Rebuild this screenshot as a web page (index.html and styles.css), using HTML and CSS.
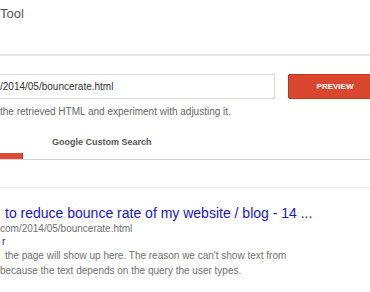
FILE: index.html
```html
<!DOCTYPE html>
<html lang="en">
<head>
    <meta charset="UTF-8">
    <meta name="viewport" content="width=device-width, initial-scale=1.0">
    <title>Bounce Rate Preview Tool</title>
    <link rel="stylesheet" href="styles.css">
</head>
<body>
    <div class="page">
        <header class="tool-head">
            <h1 class="tool-title">Tool</h1>
        </header>

        <section class="fetch">
            <div class="fetch-row">
                <div class="url-field">/2014/05/bouncerate.html</div>
                <button class="btn-preview">PREVIEW</button>
            </div>
            <p class="hint">the retrieved HTML and experiment with adjusting it.</p>
        </section>

        <nav class="tabs">
            <span class="tab tab-active"></span>
            <span class="tab">Google Custom Search</span>
        </nav>

        <div class="results">
            <div class="result">
                <a class="result-title" href="#">to reduce bounce rate of my website / blog - 14 ...</a>
                <div class="result-url">com/2014/05/bouncerate.html</div>
                <a class="result-more" href="#">r</a>
                <p class="result-snippet">the page will show up here. The reason we can't show text from<br>because the text depends on the query the user types.</p>
            </div>
        </div>
    </div>
</body>
</html>
```

FILE: styles.css
```css
* {
    margin: 0;
    padding: 0;
    box-sizing: border-box;
}

html,
body {
    overflow: hidden;
}

body {
    background: #fff;
    font-family: 'Liberation Sans', Arial, sans-serif;
    color: #666;
}

.page {
    width: 382px;
}

.tool-head {
    height: 56px;
    padding-top: 6px;
    border-bottom: 2px solid #e5e5e5;
}

.tool-title {
    font-size: 13px;
    line-height: 16px;
    font-weight: normal;
    color: #555;
}

.fetch {
    padding-top: 18px;
}

.fetch-row {
    display: flex;
    gap: 13px;
}

.url-field {
    margin-left: -11px;
    width: 286px;
    height: 25px;
    padding-left: 10px;
    border: 1px solid #d9d9d9;
    font-size: 10px;
    line-height: 23px;
    color: #333;
}

.btn-preview {
    flex-shrink: 0;
    width: 94px;
    height: 25px;
    background: #d9472f;
    border: 1px solid #c0331f;
    border-radius: 2px;
    color: #fff;
    font-family: 'Liberation Sans', Arial, sans-serif;
    font-size: 8px;
    font-weight: bold;
}

.hint {
    margin-top: 6px;
    font-size: 10px;
    line-height: 13px;
    color: #666;
}

.tabs {
    display: flex;
    align-items: flex-end;
    gap: 29px;
    margin-top: 2px;
    border-bottom: 1px solid #d4d4d4;
}

.tab {
    padding: 17px 0 11px;
    font-size: 9px;
    line-height: 11px;
    font-weight: bold;
    color: #555;
}

.tab-active {
    width: 23px;
    height: 6px;
    padding: 0;
    background: #dd4b39;
    border-right: 1px solid #c23321;
}

.results {
    margin-top: 27px;
    border-top: 1px solid #ebebeb;
    padding-top: 17px;
}

.result {
    display: flex;
    flex-direction: column;
    align-items: flex-start;
}

.result-title {
    margin-left: 5px;
    font-size: 14px;
    line-height: 17px;
    color: #1515c8;
    text-decoration: none;
}

.result-url {
    font-size: 10px;
    line-height: 14px;
    color: #707070;
}

.result-more {
    margin-left: 2px;
    font-size: 10px;
    line-height: 12px;
    color: #1a1ad8;
    text-decoration: none;
}

.result-snippet {
    font-size: 10px;
    line-height: 15px;
    text-indent: 5px;
    color: #707070;
}
```
